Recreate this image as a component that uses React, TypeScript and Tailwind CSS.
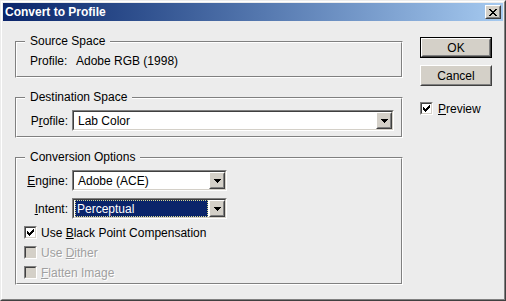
import React from "react";

function Raised({ className = "", innerClassName = "", children }: { className?: string; innerClassName?: string; children?: React.ReactNode }) {
  return (
    <div className={"border border-t-white border-l-white border-b-[#404040] border-r-[#404040] " + className}>
      <div className={"h-full w-full border border-t-[#d4d0c8] border-l-[#d4d0c8] border-b-[#808080] border-r-[#808080] bg-[#d4d0c8] " + innerClassName}>
        {children}
      </div>
    </div>
  );
}

function Sunken({ className = "", innerClassName = "", children }: { className?: string; innerClassName?: string; children?: React.ReactNode }) {
  return (
    <div className={"border border-t-[#808080] border-l-[#808080] border-b-white border-r-white " + className}>
      <div className={"h-full w-full border border-t-[#404040] border-l-[#404040] border-b-[#d4d0c8] border-r-[#d4d0c8] " + innerClassName}>
        {children}
      </div>
    </div>
  );
}

function Arrow() {
  return (
    <svg width="7" height="4" viewBox="0 0 7 4" shapeRendering="crispEdges">
      <rect x="0" y="0" width="7" height="1" fill="#000" />
      <rect x="1" y="1" width="5" height="1" fill="#000" />
      <rect x="2" y="2" width="3" height="1" fill="#000" />
      <rect x="3" y="3" width="1" height="1" fill="#000" />
    </svg>
  );
}

function Check({ color = "#000" }: { color?: string }) {
  const rows: [number, number, number][] = [
    [0, 6, 1],
    [1, 5, 2],
    [2, 0, 1],
    [2, 4, 3],
    [3, 0, 2],
    [3, 3, 3],
    [4, 0, 5],
    [5, 1, 3],
    [6, 2, 1],
  ];
  return (
    <svg width="7" height="7" viewBox="0 0 7 7" shapeRendering="crispEdges">
      {rows.map(([y, x, w], i) => (
        <rect key={i} x={x} y={y} width={w} height="1" fill={color} />
      ))}
    </svg>
  );
}

function CloseX() {
  const rows: [number, number, number][] = [
    [0, 0, 2],
    [0, 6, 2],
    [1, 1, 2],
    [1, 5, 2],
    [2, 2, 4],
    [3, 3, 2],
    [4, 2, 4],
    [5, 1, 2],
    [5, 5, 2],
    [6, 0, 2],
    [6, 6, 2],
  ];
  return (
    <svg width="8" height="7" viewBox="0 0 8 7" shapeRendering="crispEdges">
      {rows.map(([y, x, w], i) => (
        <rect key={i} x={x} y={y} width={w} height="1" fill="#000" />
      ))}
    </svg>
  );
}

function Select({ width, text, focused = false }: { width: string; text: string; focused?: boolean }) {
  return (
    <Sunken className={width + " h-[21px]"} innerClassName="bg-white flex items-stretch">
      {focused ? (
        <div className="flex-1 ml-[1px] mr-[1px] bg-[#0a246a] border border-dotted border-[#d8d890] flex items-center pl-[1px] text-white">
          {text}
        </div>
      ) : (
        <div className="flex-1 flex items-center pl-[4px]">{text}</div>
      )}
      <Raised className="w-[16px] h-[17px]" innerClassName="flex items-center justify-center">
        <Arrow />
      </Raised>
    </Sunken>
  );
}

function CheckBox({ checked, disabled = false }: { checked: boolean; disabled?: boolean }) {
  return (
    <Sunken className="w-[13px] h-[13px] shrink-0" innerClassName={(disabled ? "bg-[#d4d0c8]" : "bg-white") + " flex items-center justify-center"}>
      {checked ? <Check /> : null}
    </Sunken>
  );
}

function GroupBox({ title, className = "", innerClassName = "", labelClass = "", children }: { title: string; className?: string; innerClassName?: string; labelClass?: string; children?: React.ReactNode }) {
  return (
    <div className={"relative border border-t-[#808080] border-l-[#808080] border-b-white border-r-white " + className}>
      <div className={"h-full w-full border border-t-white border-l-white border-b-[#808080] border-r-[#808080] " + innerClassName}>
        {children}
      </div>
      <div className={"absolute top-[-8px] left-[9px] px-[5px] bg-[#ececec] " + labelClass}>{title}</div>
    </div>
  );
}

export default function App() {
  return (
    <div className="w-[506px] h-[301px] font-['Liberation_Sans',Arial,sans-serif] text-[12px] leading-[14px] text-black select-none">
      <div className="h-full border border-t-[#ececec] border-l-[#ececec] border-b-[#404040] border-r-[#404040]">
        <div className="h-full border border-t-white border-l-white border-b-[#808080] border-r-[#808080] bg-[#ececec] p-[1px] flex flex-col">
          {/* Title bar */}
          <div className="h-[18px] shrink-0 flex items-center justify-between bg-linear-to-r from-[#0a246a] to-[#a6caf0] pl-[2px] pr-[2px]">
            <span className="text-white font-bold text-[12px] leading-[14px]">Convert to Profile</span>
            <Raised className="w-[16px] h-[14px]" innerClassName="flex items-center justify-center">
              <CloseX />
            </Raised>
          </div>

          {/* Body */}
          <div className="flex flex-1">
            {/* Left column */}
            <div className="pl-[12px] pt-[20px] flex flex-col gap-[19px]">
              <GroupBox title="Source Space" className="w-[388px] h-[37px]" innerClassName="pt-[11px] pl-[13px]">
                <div className="flex">
                  <span className="w-[46px]">Profile:</span>
                  <span>Adobe RGB (1998)</span>
                </div>
              </GroupBox>

              <GroupBox title="Destination Space" className="w-[388px] h-[41px]" innerClassName="pt-[11px]">
                <div className="flex items-center">
                  <span className="w-[51px] text-right mr-[4px]">
                    P<span className="underline">r</span>ofile:
                  </span>
                  <Select width="w-[322px]" text="Lab Color" />
                </div>
              </GroupBox>

              <GroupBox title="Conversion Options" className="w-[388px] h-[128px]" innerClassName="pt-[11px] flex flex-col">
                <div className="flex items-center">
                  <span className="w-[51px] text-right mr-[4px]">
                    <span className="underline">E</span>ngine:
                  </span>
                  <Select width="w-[155px]" text="Adobe (ACE)" />
                </div>
                <div className="flex items-center mt-[7px]">
                  <span className="w-[51px] text-right mr-[4px]">
                    <span className="underline">I</span>ntent:
                  </span>
                  <Select width="w-[155px]" text="Perceptual" focused />
                </div>
                <div className="flex flex-col gap-[7px] mt-[7px] pl-[7px]">
                  <div className="flex items-center h-[13px]">
                    <CheckBox checked />
                    <span className="ml-[4px]">
                      Use <span className="underline">B</span>lack Point Compensation
                    </span>
                  </div>
                  <div className="flex items-center h-[13px] text-[#a0a0a0] [text-shadow:1px_1px_0_#ffffff]">
                    <CheckBox checked={false} disabled />
                    <span className="ml-[4px]">
                      Use <span className="underline">D</span>ither
                    </span>
                  </div>
                  <div className="flex items-center h-[13px] text-[#a0a0a0] [text-shadow:1px_1px_0_#ffffff]">
                    <CheckBox checked={false} disabled />
                    <span className="ml-[4px]">
                      <span className="underline">F</span>latten Image
                    </span>
                  </div>
                </div>
              </GroupBox>
            </div>

            {/* Right column */}
            <div className="ml-[17px] pt-[16px] flex flex-col">
              <div className="border border-black w-[72px] h-[21px]">
                <Raised className="w-full h-full" innerClassName="flex items-center justify-center">
                  OK
                </Raised>
              </div>
              <Raised className="w-[72px] h-[21px] mt-[7px]" innerClassName="flex items-center justify-center">
                Cancel
              </Raised>
              <div className="flex items-center h-[13px] mt-[16px]">
                <CheckBox checked />
                <span className="ml-[5px]">
                  <span className="underline">P</span>review
                </span>
              </div>
            </div>
          </div>
        </div>
      </div>
    </div>
  );
}
